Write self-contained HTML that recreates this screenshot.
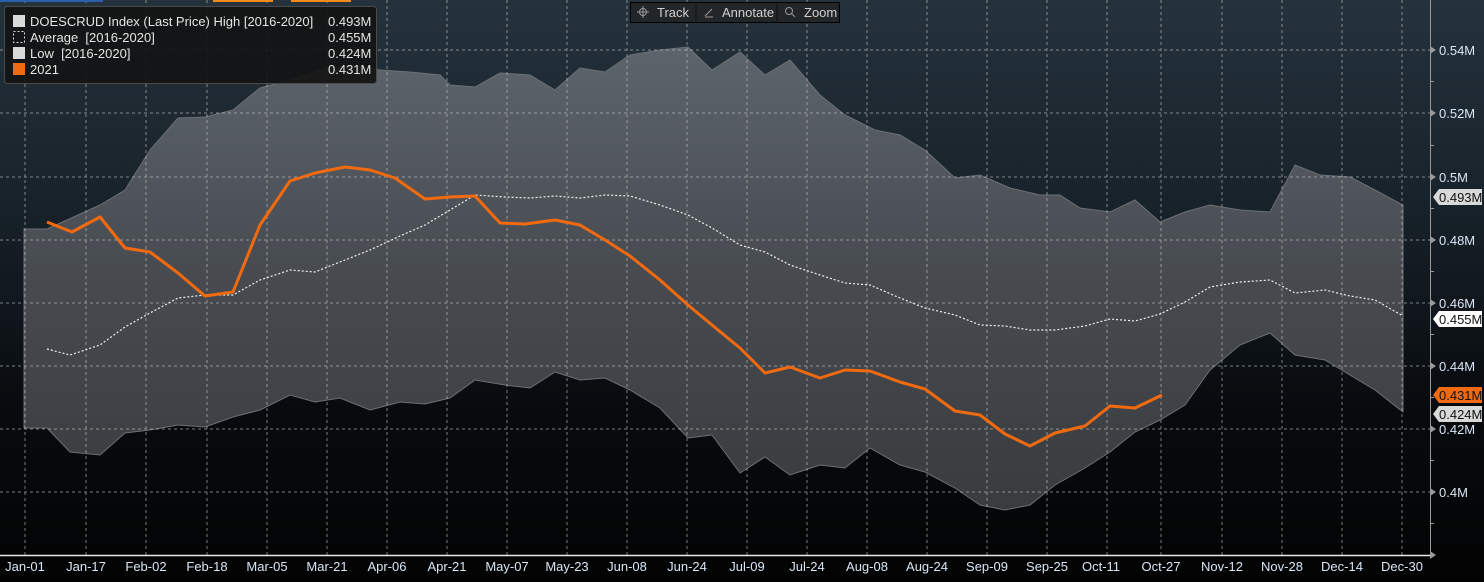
<!DOCTYPE html>
<html><head><meta charset="utf-8"><style>
html,body{margin:0;padding:0;background:#000;}
svg{display:block;font-family:"Liberation Sans",sans-serif;}
</style></head><body>
<svg width="1484" height="582" viewBox="0 0 1484 582" xmlns="http://www.w3.org/2000/svg">
<defs>
<linearGradient id="bg" x1="0" y1="0" x2="0" y2="582" gradientUnits="userSpaceOnUse">
<stop offset="0" stop-color="#25323c"/><stop offset="0.35" stop-color="#18222a"/><stop offset="0.7" stop-color="#080b0e"/><stop offset="1" stop-color="#030303"/>
</linearGradient>
<linearGradient id="band" x1="0" y1="40" x2="0" y2="510" gradientUnits="userSpaceOnUse">
<stop offset="0" stop-color="#5d656d"/><stop offset="0.5" stop-color="#474b50"/><stop offset="1" stop-color="#393b3e"/>
</linearGradient>
</defs>
<rect width="1484" height="582" fill="url(#bg)"/>
<polygon fill="url(#band)" stroke="#6b7075" stroke-width="1" points="24,229 47,229 78,215 100,205 125,190 150,150 178,118 205,117 233,110 260,88 290,80 320,70 350,65 380,70 410,72 440,75 450,85 475,87 500,73 530,75 555,90 580,68 605,72 630,55 660,50 688,47 712,70 740,52 765,75 790,60 820,95 845,115 875,130 900,135 925,150 955,178 980,175 1010,188 1040,195 1060,195 1080,208 1110,212 1135,200 1160,222 1185,212 1210,205 1240,210 1270,212 1295,165 1320,175 1350,177 1375,190 1403,205 1403,412 1375,390 1350,375 1325,360 1295,355 1270,333 1240,345 1210,370 1185,405 1160,420 1135,432 1110,452 1085,468 1055,485 1030,505 1005,510 980,505 955,488 925,472 900,465 870,448 845,468 820,465 790,475 765,457 740,473 712,435 688,438 660,408 630,390 605,378 580,380 555,372 530,388 505,385 475,380 450,398 425,404 400,402 370,410 340,398 315,402 290,395 260,410 233,417 205,427 178,425 150,430 125,433 100,455 70,452 47,428 24,428"/>
<g stroke="#c8c8c8" stroke-width="1" stroke-dasharray="3,3" opacity="0.6">
<line x1="0" y1="50" x2="1430" y2="50"/><line x1="0" y1="113" x2="1430" y2="113"/><line x1="0" y1="177" x2="1430" y2="177"/><line x1="0" y1="240" x2="1430" y2="240"/><line x1="0" y1="303" x2="1430" y2="303"/><line x1="0" y1="366" x2="1430" y2="366"/><line x1="0" y1="429" x2="1430" y2="429"/><line x1="0" y1="492" x2="1430" y2="492"/>
<line x1="25" y1="0" x2="25" y2="555"/><line x1="86" y1="0" x2="86" y2="555"/><line x1="146" y1="0" x2="146" y2="555"/><line x1="207" y1="0" x2="207" y2="555"/><line x1="267" y1="0" x2="267" y2="555"/><line x1="327" y1="0" x2="327" y2="555"/><line x1="387" y1="0" x2="387" y2="555"/><line x1="447" y1="0" x2="447" y2="555"/><line x1="507" y1="0" x2="507" y2="555"/><line x1="567" y1="0" x2="567" y2="555"/><line x1="627" y1="0" x2="627" y2="555"/><line x1="687" y1="0" x2="687" y2="555"/><line x1="747" y1="0" x2="747" y2="555"/><line x1="807" y1="0" x2="807" y2="555"/><line x1="867" y1="0" x2="867" y2="555"/><line x1="927" y1="0" x2="927" y2="555"/><line x1="987" y1="0" x2="987" y2="555"/><line x1="1047" y1="0" x2="1047" y2="555"/><line x1="1107" y1="0" x2="1107" y2="555"/><line x1="1161" y1="0" x2="1161" y2="555"/><line x1="1222" y1="0" x2="1222" y2="555"/><line x1="1282" y1="0" x2="1282" y2="555"/><line x1="1342" y1="0" x2="1342" y2="555"/><line x1="1402" y1="0" x2="1402" y2="555"/>
</g>
<polyline fill="none" stroke="#f0f0f0" stroke-width="1.2" stroke-dasharray="2,2" points="47,349 70,355 100,345 125,327 150,313 178,298 205,295 233,295 260,280 290,270 315,272 340,262 370,250 400,236 425,225 450,210 475,195 505,197 530,198 555,196 580,198 605,195 630,196 660,205 688,215 712,228 740,245 765,252 790,265 820,275 845,283 870,285 900,298 925,308 955,315 980,325 1005,326 1030,330 1055,330 1085,326 1110,319 1135,321 1160,314 1185,302 1210,287 1240,282 1270,280 1295,293 1325,290 1350,296 1375,300 1403,316"/>
<polyline fill="none" stroke="#f26a10" stroke-width="3" stroke-linejoin="round" points="47,222 72,232 100,217 125,248 150,252 178,273 205,296 233,292 260,225 290,181 315,173 345,167 370,170 395,178 425,199 450,197 475,196 500,223 525,224 555,220 580,225 605,240 630,256 660,280 688,305 712,325 740,348 765,373 790,367 820,378 845,370 870,371 900,382 925,389 955,411 980,415 1005,434 1030,446 1055,433 1085,426 1110,406 1135,408 1162,395"/>
<line x1="0" y1="555.5" x2="1430" y2="555.5" stroke="#e8e8e8" stroke-width="1.5"/>
<line x1="1430.5" y1="0" x2="1430.5" y2="555" stroke="#9a9a9a" stroke-width="1"/>
<g fill="#9a9a9a">
<polygon points="1430,46 1436,50 1430,54"/><polygon points="1430,109 1436,113 1430,117"/><polygon points="1430,173 1436,177 1430,181"/><polygon points="1430,236 1436,240 1430,244"/><polygon points="1430,299 1436,303 1430,307"/><polygon points="1430,362 1436,366 1430,370"/><polygon points="1430,425 1436,429 1430,433"/><polygon points="1430,488 1436,492 1430,496"/><polygon points="1430,551 1436,555 1430,559"/>
<rect x="1430" y="81" width="4" height="1"/><rect x="1430" y="145" width="4" height="1"/><rect x="1430" y="208" width="4" height="1"/><rect x="1430" y="271" width="4" height="1"/><rect x="1430" y="334" width="4" height="1"/><rect x="1430" y="397" width="4" height="1"/><rect x="1430" y="460" width="4" height="1"/><rect x="1430" y="523" width="4" height="1"/>
</g>
<g fill="#d8e6f5" font-size="13">
<text x="1439" y="55">0.54M</text><text x="1439" y="118">0.52M</text><text x="1439" y="182">0.5M</text><text x="1439" y="245">0.48M</text><text x="1439" y="308">0.46M</text><text x="1439" y="371">0.44M</text><text x="1439" y="434">0.42M</text><text x="1439" y="497">0.4M</text>
</g>
<g font-size="13">
<polygon points="1433,197 1439,189 1482,189 1482,205 1439,205" fill="#d9d9d9"/><text x="1439" y="202" fill="#111">0.493M</text>
<polygon points="1433,319 1439,311 1482,311 1482,327 1439,327" fill="#ffffff"/><text x="1439" y="324" fill="#111">0.455M</text>
<polygon points="1433,395 1439,387 1482,387 1482,403 1439,403" fill="#f26a10"/><text x="1439" y="400" fill="#111">0.431M</text>
<polygon points="1433,414 1439,406 1482,406 1482,422 1439,422" fill="#d9d9d9"/><text x="1439" y="419" fill="#111">0.424M</text>
</g>
<g fill="#d8e6f5" font-size="13" text-anchor="middle">
<text x="25" y="571">Jan-01</text><text x="86" y="571">Jan-17</text><text x="146" y="571">Feb-02</text><text x="207" y="571">Feb-18</text><text x="267" y="571">Mar-05</text><text x="327" y="571">Mar-21</text><text x="387" y="571">Apr-06</text><text x="447" y="571">Apr-21</text><text x="507" y="571">May-07</text><text x="567" y="571">May-23</text><text x="627" y="571">Jun-08</text><text x="687" y="571">Jun-24</text><text x="747" y="571">Jul-09</text><text x="807" y="571">Jul-24</text><text x="867" y="571">Aug-08</text><text x="927" y="571">Aug-24</text><text x="987" y="571">Sep-09</text><text x="1047" y="571">Sep-25</text><text x="1101" y="571">Oct-11</text><text x="1161" y="571">Oct-27</text><text x="1222" y="571">Nov-12</text><text x="1282" y="571">Nov-28</text><text x="1342" y="571">Dec-14</text><text x="1402" y="571">Dec-30</text>
</g>
<rect x="0" y="0" width="103" height="2" fill="#2a5fb0"/>
<rect x="213" y="0" width="60" height="2" fill="#f08a1a"/><rect x="291" y="0" width="60" height="2" fill="#f08a1a"/>
<rect x="4.5" y="6.5" width="372" height="77" rx="3" fill="#141414" fill-opacity="0.92" stroke="#4a4a4a"/>
<g font-size="13" fill="#e4e4e4">
<rect x="13" y="15" width="12" height="12" fill="#d9d9d9"/>
<rect x="13.5" y="31.5" width="11" height="11" fill="none" stroke="#ddd" stroke-dasharray="2,2"/>
<rect x="13" y="47" width="12" height="12" fill="#d9d9d9"/>
<rect x="13" y="63" width="12" height="12" fill="#f26a10"/>
<text x="30" y="26">DOESCRUD Index (Last Price) High [2016-2020]</text><text x="328" y="26">0.493M</text>
<text x="30" y="42" xml:space="preserve">Average  [2016-2020]</text><text x="328" y="42">0.455M</text>
<text x="30" y="58" xml:space="preserve">Low  [2016-2020]</text><text x="328" y="58">0.424M</text>
<text x="30" y="74">2021</text><text x="328" y="74">0.431M</text>
</g>
<rect x="630.5" y="2.5" width="209" height="20" fill="#232628" stroke="#000"/>
<line x1="696" y1="3" x2="696" y2="22" stroke="#111"/><line x1="777" y1="3" x2="777" y2="22" stroke="#111"/>
<g stroke="#999" fill="none" stroke-width="1">
<circle cx="643" cy="12" r="3.5"/><line x1="637" y1="12" x2="649" y2="12"/><line x1="643" y1="6" x2="643" y2="18"/>
<line x1="705" y1="16" x2="712" y2="9"/><line x1="705" y1="17" x2="713" y2="17"/>
<circle cx="789" cy="11" r="3.5"/><line x1="791.5" y1="13.5" x2="795" y2="17"/>
</g>
<g font-size="13" fill="#d0d0d0">
<text x="657" y="17">Track</text><text x="722" y="17">Annotate</text><text x="804" y="17">Zoom</text>
</g>
</svg>
</body></html>
